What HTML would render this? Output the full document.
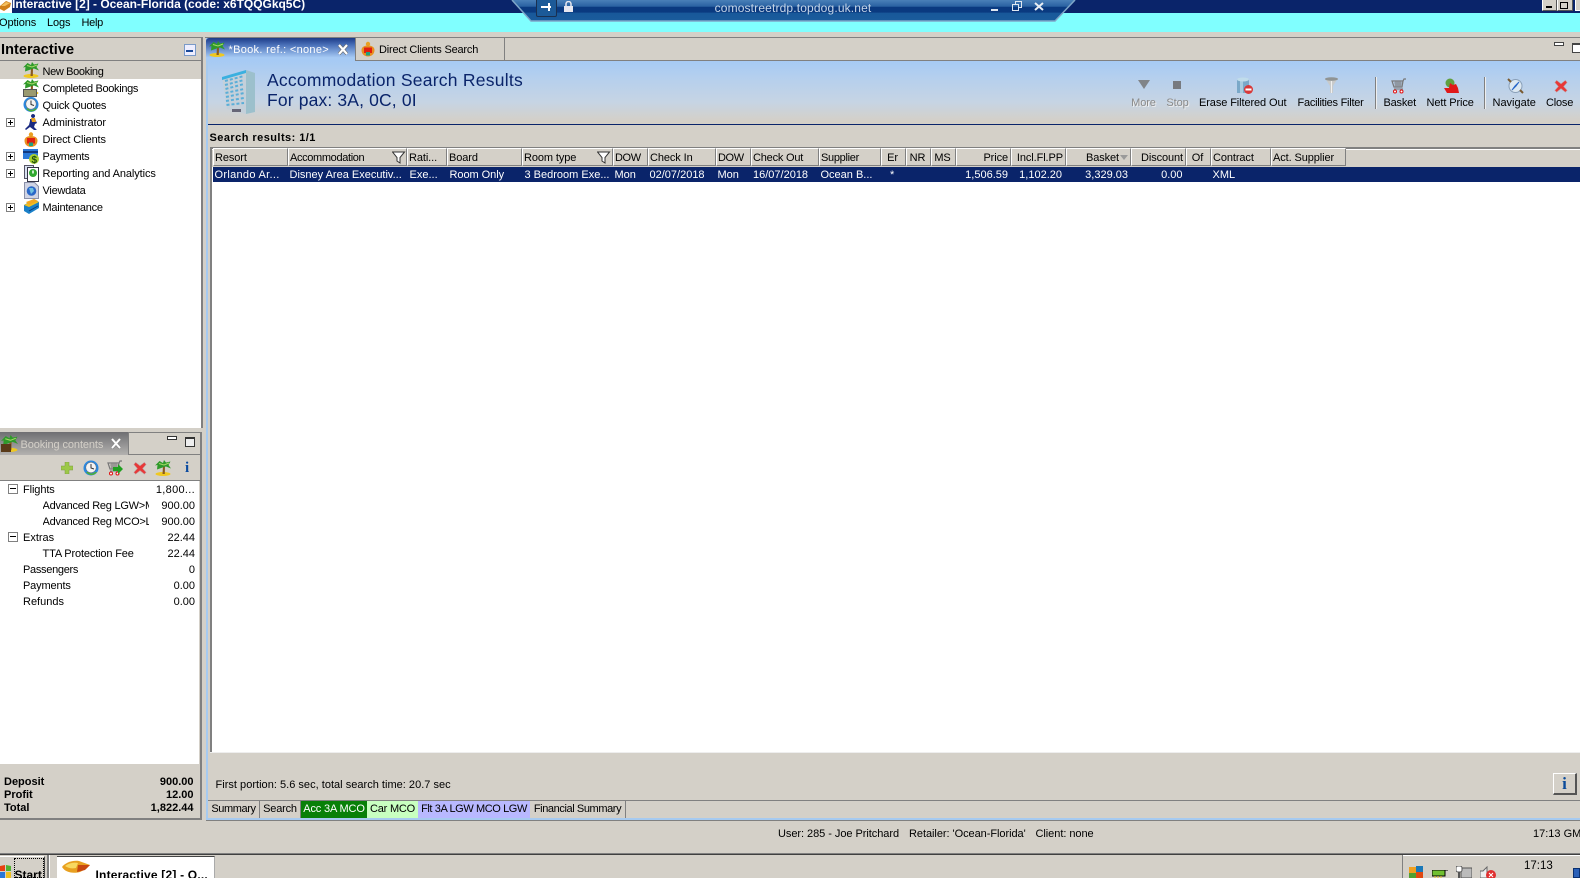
<!DOCTYPE html>
<html><head><meta charset="utf-8"><title>Interactive</title>
<style>
html,body{margin:0;padding:0;width:1580px;height:878px;overflow:hidden;background:#d4d0c8}
body{position:relative;font:11px/14px "Liberation Sans",sans-serif;color:#000}
.b,.t,svg.i{position:absolute}
.t{white-space:nowrap;line-height:14px;margin-top:1px}
.n{margin-top:0}
.r{text-align:right}
.c{text-align:center}
.bold{font-weight:bold}
.h{position:absolute;top:149px;height:16px;background:#d4d0c8;border-left:1px solid #fff;border-right:1px solid #808080;border-top:1px solid #fff;border-bottom:1px solid #808080;line-height:18px;white-space:nowrap;overflow:hidden;padding:0 1px 0 1px;margin-top:-1px;letter-spacing:-.1px}
.h.r{padding:0 2px 0 1px}
.h.c{padding:0 2px 0 0}
.w{color:#fff}
.ex{position:absolute;width:8px;height:8px;border:1px solid #808080;background:#fff}
.ex:before{content:"";position:absolute;left:1px;right:1px;top:3px;height:1px;background:#000}
.ex.p{width:7px;height:7px}
.ex.p:after{content:"";position:absolute;top:1px;bottom:1px;left:3px;width:1px;background:#000}
.tab{position:absolute;top:801px;height:17px;line-height:17px;border-right:1px solid #808080;text-align:center;white-space:nowrap;overflow:hidden}
.dim{color:#8a8a8a;text-shadow:1px 1px 0 #eee}
</style></head><body>
<svg width="0" height="0" style="position:absolute"><defs>
<symbol id="palm" viewBox="0 0 16 16"><ellipse cx="8" cy="14" rx="7.500" ry="2" fill="#f0c820"/><path d="M7.500 14 8 6 10 6 9.800 14z" fill="#8a5a20"/><path d="M9 7 2 9.500 2.500 5 0 5.500 4.500 1 8 3 9 0 11 2.500 15.500 1.500 13.500 5 16 8.500 11 6.500z" fill="#2f9a2a"/><path d="M9 5 4 3.500M9 5l5-2" stroke="#a8d868" fill="none"/></symbol>
<symbol id="red" viewBox="0 0 16 16"><circle cx="8" cy="3" r="2.200" fill="#e8a020"/><path d="M1.500 9c0-3 3-4.500 6.500-4.500s6.500 1.500 6.500 4.500c0 4-3 6.500-6.500 6.500S1.500 13 1.500 9z" fill="#e89020"/><path d="M4 6.500h8v5.500H4z" fill="#e02010"/><path d="M6 11h4v3.500H6z" fill="#20a080"/></symbol>
<symbol id="clock" viewBox="0 0 16 16"><circle cx="8" cy="8" r="7.500" fill="#2a88e0"/><circle cx="8" cy="7.500" r="5.200" fill="#f4f4f4" stroke="#666" stroke-width=".5"/><path d="M8 4v4l3 1" stroke="#333" fill="none"/><path d="M3 12c3 4 8 4 11 0l-2 0c-2 2-5 2-7 0z" fill="#50b030"/></symbol>
<symbol id="x" viewBox="0 0 16 16"><path d="M3 1.500 8 5.500 13 1.500 15 4 11 8.500 15 13 13 15 8 11 3 15 1 13 5 8.500 1 4z" fill="#e83838" stroke="#c0a0a0" stroke-width=".6"/></symbol>
<symbol id="cart" viewBox="0 0 16 16"><path d="M15 1h-2l-1 2H1l2 6h8l1-6" fill="none" stroke="#777" stroke-width="1.200"/><path d="M3 5h9M3.500 7h8M5 3v6M7 3v6M9 3v6" stroke="#777" stroke-width=".8"/><path d="M3 11h9" stroke="#777"/><circle cx="4" cy="13.500" r="1.500" fill="#fff" stroke="#e01010"/><circle cx="10.500" cy="13.500" r="1.500" fill="#fff" stroke="#e01010"/></symbol>
</defs></svg>

<!-- window title -->
<div class="b" style="left:0;top:0;width:1580px;height:13px;background:#0a246a"></div>
<div class="b" style="left:0;top:0;width:12px;height:13px;background:#fff"></div>
<svg class="i" style="left:0;top:0" width="11" height="12"><path d="M0 6 6 1 11 3 10 7 4 11 0 9z" fill="#d0801c"/><path d="M1 6 6 2 10 3 5 6z" fill="#f4c060"/></svg>
<div class="t w bold n" style="left:12px;top:-3px;font-size:12px;letter-spacing:-.02px">Interactive [2] - Ocean-Florida (code: x6TQQGkq5C)</div>
<div class="b" style="left:0;top:13px;width:1580px;height:19px;background:#80ffff"></div>
<div class="t n" style="left:-1px;top:16px;letter-spacing:-.1px">Options</div>
<div class="t n" style="left:47px;top:16px;letter-spacing:-.1px">Logs</div>
<div class="t n" style="left:81.500px;top:16px;letter-spacing:-.3px">Help</div>

<!-- window buttons -->
<div class="b" style="left:1542px;top:-4px;width:13px;height:13px;background:#d4d0c8;border:1px solid #fff;border-right-color:#555;border-bottom-color:#555"></div>
<div class="b" style="left:1546px;top:6px;width:6px;height:2px;background:#000"></div>
<div class="b" style="left:1557px;top:-4px;width:14px;height:13px;background:#d4d0c8;border:1px solid #fff;border-right-color:#555;border-bottom-color:#555"></div>
<div class="b" style="left:1560px;top:2px;width:6px;height:5px;border:1px solid #000"></div>
<div class="b" style="left:1575px;top:-4px;width:14px;height:13px;background:#d4d0c8;border:1px solid #fff"></div>

<!-- RDP bar -->
<svg class="i" style="left:508px;top:0" width="572" height="23"><defs><linearGradient id="rd" x1="0" y1="0" x2="0" y2="1"><stop offset="0" stop-color="#4a80b8"/><stop offset=".3" stop-color="#2a62a2"/><stop offset=".34" stop-color="#0a3a80"/><stop offset=".58" stop-color="#0a3a80"/><stop offset=".62" stop-color="#18589a"/><stop offset="1" stop-color="#1a5c9c"/></linearGradient></defs><path d="M4 0 23 21H547L567 0z" fill="url(#rd)"/><path d="M4 0 23 21H547L567 0" fill="none" stroke="#7fa6c8" stroke-width="1.500"/></svg>
<div class="b" style="left:536px;top:-2px;width:19px;height:17px;border:1px solid #1a3050;border-radius:2px;background:#1c5a98"></div>
<svg class="i" style="left:541px;top:2px" width="13" height="10"><path d="M0 5h7M8 1v8M9 5h1" stroke="#fff" stroke-width="2" fill="none"/></svg>
<svg class="i" style="left:563px;top:1px" width="11" height="11"><rect x="1" y="5" width="9" height="6" fill="#e8e8f0"/><path d="M3 5V3a2.500 2.500 0 0 1 5 0v2" fill="none" stroke="#e8e8f0" stroke-width="1.500"/></svg>
<div class="t c n" style="left:690px;top:1px;width:206px;font-size:12px;color:#c6d6e8;letter-spacing:.15px">comostreetrdp.topdog.uk.net</div>
<div class="b" style="left:991px;top:9px;width:7px;height:2px;background:#e0e8f0"></div>
<svg class="i" style="left:1012px;top:1px" width="11" height="11"><path d="M3.500 3V.5h6v6H7M.5 3.500h6v6h-6z" fill="none" stroke="#e0e8f0"/></svg>
<svg class="i" style="left:1034px;top:2px" width="10" height="9"><path d="M1 1l8 7M9 1 1 8" stroke="#e8eef4" stroke-width="2"/></svg>

<!-- main left panel -->
<div class="b" style="left:0;top:37px;width:203px;height:1px;background:#808080"></div>
<div class="t bold" style="left:1px;top:42px;font-size:14.500px;letter-spacing:.05px">Interactive</div>
<div class="b" style="left:184px;top:44px;width:10px;height:10px;border:1px solid #7a9ac8;background:#eef"></div>
<div class="b" style="left:186px;top:50px;width:7px;height:2px;background:#1a4a9a"></div>
<div class="b" style="left:0;top:60px;width:201px;height:1px;background:#808080"></div>
<div class="b" style="left:0;top:61px;width:201px;height:367px;background:#fff"></div>
<div class="b" style="left:0;top:61px;width:201px;height:18px;background:#d4d0c8"></div>
<div class="b" style="left:201px;top:37px;width:2px;height:391px;background:#808080"></div>

<svg class="i" style="left:23px;top:62px" width="16" height="16"><use href="#palm"/></svg>
<svg class="i" style="left:23px;top:79px" width="16" height="16"><use href="#palm"/></svg>
<div class="b" style="left:23px;top:89px;width:12px;height:6px;background:#9a9a70;border:1px solid #555"></div>
<svg class="i" style="left:23px;top:96px" width="16" height="17"><use href="#clock"/></svg>
<svg class="i" style="left:25px;top:114px" width="14" height="16"><path d="M8 0a2 2 0 1 0 .1 0zM5 5h5l2 4-2 1-1 3 3 3h-3L5 13l-4 3-1-1 4-4 1-4z" fill="#1a2a80"/><path d="M6 4h4l1 4H7z" fill="#e8a020"/></svg>
<svg class="i" style="left:23px;top:131px" width="16" height="17"><use href="#red"/></svg>
<svg class="i" style="left:23px;top:148px" width="16" height="17"><rect x="0" y="1" width="15" height="10" fill="#2a78d8"/><rect x="0" y="3" width="15" height="2" fill="#123a80"/><circle cx="11" cy="11" r="5" fill="#a8d030"/><text x="8.500" y="15" font-family="Liberation Sans" font-size="10" font-weight="bold" fill="#205010">$</text></svg>
<svg class="i" style="left:24px;top:165px" width="15" height="17"><rect x=".5" y=".5" width="9" height="13" fill="#d8e0f0" stroke="#556"/><rect x="3.500" y="2.500" width="11" height="14" fill="#fff" stroke="#334"/><circle cx="9" cy="8" r="4" fill="#30a830"/><path d="M9 5.500v3" stroke="#fff" stroke-width="1.500"/></svg>
<svg class="i" style="left:24px;top:182px" width="15" height="17"><path d="M.5.500h10l4 4v12H.5z" fill="#d0d4e4" stroke="#8a90a8"/><circle cx="7.500" cy="9" r="4.800" fill="#2a68c8"/><path d="M5 6h4l1 3-3 3z" fill="#70c0e0"/></svg>
<svg class="i" style="left:24px;top:199px" width="15" height="17"><path d="M0 6 10 0 15 3 15 9 5 15 0 12z" fill="#1a80c8"/><path d="M0 6 10 1 15 3 5 8z" fill="#f0c020"/><path d="M2 3 10 0 14 2 5 6z" fill="#f4a820"/><path d="M5 12l9-5" stroke="#083a80"/></svg>

<div class="t" style="left:42.500px;top:64px;letter-spacing:-.35px">New Booking</div>
<div class="t" style="left:42.500px;top:81px;letter-spacing:-.33px">Completed Bookings</div>
<div class="t" style="left:42.500px;top:98px;letter-spacing:-.25px">Quick Quotes</div>
<div class="t" style="left:42.500px;top:115px;letter-spacing:-.1px">Administrator</div>
<div class="t" style="left:42.500px;top:132px;letter-spacing:-.15px">Direct Clients</div>
<div class="t" style="left:42.500px;top:149px;letter-spacing:-.25px">Payments</div>
<div class="t" style="left:42.500px;top:166px;letter-spacing:-.1px">Reporting and Analytics</div>
<div class="t" style="left:42.500px;top:183px;letter-spacing:-.25px">Viewdata</div>
<div class="t" style="left:42.500px;top:200px;letter-spacing:-.25px">Maintenance</div>
<div class="ex p" style="left:6px;top:118px"></div>
<div class="ex p" style="left:6px;top:152px"></div>
<div class="ex p" style="left:6px;top:169px"></div>
<div class="ex p" style="left:6px;top:203px"></div>

<!-- booking contents panel -->
<div class="b" style="left:0;top:428px;width:203px;height:4px;background:#d4d0c8"></div>
<div class="b" style="left:0;top:432px;width:201px;height:1px;background:#808080"></div>
<div class="b" style="left:0;top:432px;width:128px;height:23px;background:linear-gradient(#6f6f72,#b4b2b0)"></div>
<div class="b" style="left:128px;top:433px;width:1px;height:22px;background:#808080"></div>
<div class="b" style="left:129px;top:454px;width:72px;height:1px;background:#808080"></div>
<svg class="i" style="left:1px;top:435px" width="17" height="17"><use href="#palm"/></svg>
<div class="b" style="left:1px;top:444px;width:10px;height:8px;background:#5a3a18"></div>
<div class="t" style="left:20.500px;top:437px;color:#d4d0c8;letter-spacing:-.1px">Booking contents</div>
<svg class="i" style="left:111px;top:438px" width="10" height="11"><path d="M1 1l8 9M9 1 1 10" stroke="#888" stroke-width="3.400"/><path d="M1 1l8 9M9 1 1 10" stroke="#fff" stroke-width="2"/></svg>
<div class="b" style="left:167px;top:436px;width:8px;height:2px;border:1px solid #333;background:#fff"></div>
<div class="b" style="left:185px;top:437px;width:8px;height:7px;border:1px solid #333;border-top-width:2px;background:#eee"></div>
<div class="b" style="left:0;top:480px;width:200px;height:1px;background:#808080"></div>
<div class="b" style="left:0;top:481px;width:199px;height:283px;background:#fff"></div>
<div class="b" style="left:200px;top:432px;width:2px;height:387px;background:#808080"></div>

<svg class="i" style="left:61px;top:462px" width="12" height="12"><path d="M4 0h4v4h4v4H8v4H4V8H0V4h4z" fill="#9cc848" stroke="#7a9a40" stroke-width=".5"/></svg>
<svg class="i" style="left:83px;top:460px" width="16" height="16"><use href="#clock"/></svg>
<svg class="i" style="left:107px;top:460px" width="16" height="16"><use href="#cart"/></svg>
<svg class="i" style="left:113px;top:464px" width="10" height="10"><path d="M0 3h5V0l5 5-5 5V7H0z" fill="#20a020"/></svg>
<svg class="i" style="left:133px;top:461px" width="14" height="14"><use href="#x"/></svg>
<svg class="i" style="left:155px;top:460px" width="16" height="16"><use href="#palm"/></svg>
<div class="t bold n" style="left:185px;top:460px;font:bold 15px/16px 'Liberation Serif',serif;color:#0a4aa0">i</div>

<div class="ex" style="left:8px;top:484px"></div>
<div class="ex" style="left:8px;top:532px"></div>
<div class="t" style="left:23px;top:482px;letter-spacing:-.1px">Flights</div>
<div class="t r" style="right:1385px;top:482px;letter-spacing:.3px">1,800...</div>
<div class="t" style="left:42.500px;top:498px;width:106px;overflow:hidden;letter-spacing:-.25px">Advanced Reg LGW&gt;MCO</div>
<div class="t r" style="right:1385px;top:498px">900.00</div>
<div class="t" style="left:42.500px;top:514px;width:106px;overflow:hidden;letter-spacing:-.25px">Advanced Reg MCO&gt;LGW</div>
<div class="t r" style="right:1385px;top:514px">900.00</div>
<div class="t" style="left:23px;top:530px">Extras</div>
<div class="t r" style="right:1385px;top:530px">22.44</div>
<div class="t" style="left:42.500px;top:546px;letter-spacing:-.15px">TTA Protection Fee</div>
<div class="t r" style="right:1385px;top:546px">22.44</div>
<div class="t" style="left:23px;top:562px;letter-spacing:-.3px">Passengers</div>
<div class="t r" style="right:1385px;top:562px">0</div>
<div class="t" style="left:23px;top:578px;letter-spacing:-.15px">Payments</div>
<div class="t r" style="right:1385px;top:578px">0.00</div>
<div class="t" style="left:23px;top:594px">Refunds</div>
<div class="t r" style="right:1385px;top:594px">0.00</div>

<div class="t bold" style="left:4px;top:774px">Deposit</div>
<div class="t bold r" style="right:1386.500px;top:774px">900.00</div>
<div class="t bold" style="left:4px;top:787px">Profit</div>
<div class="t bold r" style="right:1386.500px;top:787px">12.00</div>
<div class="t bold" style="left:4px;top:800px">Total</div>
<div class="t bold r" style="right:1386.500px;top:800px">1,822.44</div>
<div class="b" style="left:0;top:818px;width:202px;height:2px;background:#808080"></div>

<!-- main panel -->
<div class="b" style="left:205px;top:37px;width:1375px;height:1px;background:#808080"></div>
<div class="b" style="left:206px;top:60px;width:1374px;height:1px;background:#808080"></div>
<div class="b" style="left:206px;top:38px;width:2px;height:782px;background:#a6caf0"></div>
<div class="b" style="left:208px;top:61px;width:1372px;height:63px;background:linear-gradient(#a6caf4 0%,#b4cfee 25%,#c6d4e4 65%,#d4d0c8 95%)"></div>
<div class="b" style="left:208px;top:124px;width:1372px;height:1px;background:#0a246a"></div>

<!-- tabs -->
<div class="b" style="left:206px;top:38px;width:149px;height:23px;background:linear-gradient(#1c3a88 0%,#4a70b8 30%,#a6caf4 85%);border-radius:3px 0 0 0"></div>
<div class="b" style="left:355px;top:38px;width:1px;height:23px;background:#808080"></div>
<svg class="i" style="left:209px;top:41px" width="16" height="16"><use href="#palm"/></svg>
<div class="t w n" style="left:228.500px;top:43px;letter-spacing:.3px">*Book. ref.: &lt;none&gt;</div>
<svg class="i" style="left:338px;top:44px" width="10" height="11"><path d="M1 1l8 9M9 1 1 10" stroke="#666" stroke-width="3.400"/><path d="M1 1l8 9M9 1 1 10" stroke="#fff" stroke-width="2.200"/></svg>
<svg class="i" style="left:360px;top:41px" width="16" height="16"><use href="#red"/></svg>
<div class="t n" style="left:379px;top:43px;letter-spacing:-.2px">Direct Clients Search</div>
<div class="b" style="left:504px;top:38px;width:1px;height:22px;background:#808080"></div>
<div class="b" style="left:1554px;top:42px;width:8px;height:2px;border:1px solid #444;background:#fff"></div>
<div class="b" style="left:1572px;top:43px;width:10px;height:7px;border:1px solid #444;border-top-width:2px;background:#fff"></div>

<!-- heading -->
<svg class="i" style="left:220px;top:68px" width="37" height="48" viewBox="0 0 37 48"><path d="M2 9 26 2V46L7 41z" fill="#c4d0da"/><path d="M26 2 35 5V44L26 46z" fill="#9cc0cc"/><path d="M2 9 26 2V5L2 12z" fill="#3ab0e0"/><g stroke="#5aaed8" stroke-width="2" stroke-dasharray="3 2" fill="none"><path d="M5 13 24 8M5 17 24 12M5.500 21 24 16M5.500 25 24 21M6 29 24 25M6 33 24 30M6.500 37 24 35"/></g><path d="M12 41h9v3h-9z" fill="#667"/></svg>
<div class="t n" style="left:267px;top:72px;font-size:17.500px;line-height:17px;color:#0a246a;letter-spacing:.25px">Accommodation Search Results</div>
<div class="t n" style="left:267px;top:92px;font-size:17.500px;line-height:17px;color:#0a246a;letter-spacing:.15px">For pax: 3A, 0C, 0I</div>

<!-- toolbar -->
<svg class="i" style="left:1138px;top:80px" width="13" height="10"><path d="M0 0h12L6 9z" fill="#808488"/></svg>
<div class="b" style="left:1173px;top:81px;width:8px;height:8px;background:#777a80"></div>
<svg class="i" style="left:1237px;top:77px" width="17" height="18"><path d="M0 2h12v14H0z" fill="#7aa8c8"/><path d="M3 3h3v13H3z" fill="#a8cce0"/><ellipse cx="6" cy="2.500" rx="6" ry="2" fill="#c0dceb"/><circle cx="11.500" cy="12.500" r="4.500" fill="#d83838"/><rect x="8.500" y="11.500" width="6" height="2" fill="#fff"/></svg>
<svg class="i" style="left:1325px;top:77px" width="13" height="17"><path d="M0 1h13L8 9v7H5V9z" fill="#c8caca"/><ellipse cx="6.500" cy="2" rx="6.500" ry="1.800" fill="#909494"/><path d="M6.500 4v12" stroke="#f0f0f0"/></svg>
<div class="b" style="left:1375px;top:77px;width:1px;height:32px;background:#808080;border-right:1px solid #eee"></div>
<svg class="i" style="left:1391px;top:78px" width="16" height="16"><use href="#cart"/></svg>
<svg class="i" style="left:1443px;top:78px" width="17" height="16"><circle cx="7" cy="5" r="4.500" fill="#60a040"/><path d="M1 10h5l1-5 3 2 3-1 2 4 1 5H4z" fill="#e01818"/></svg>
<div class="b" style="left:1484px;top:77px;width:1px;height:32px;background:#808080;border-right:1px solid #eee"></div>
<svg class="i" style="left:1507px;top:78px" width="17" height="16"><circle cx="8.500" cy="8" r="6.500" fill="#dce8f2" stroke="#8aa0b8"/><path d="M1 1l3 3M16 15l-3-3" stroke="#7a5a30" stroke-width="2"/><path d="M12 4 9 8 5 12 8 8z" fill="#e02020" stroke="#2a68c8"/></svg>
<svg class="i" style="left:1554px;top:79px" width="14" height="14"><use href="#x"/></svg>

<div class="t c dim" style="left:1123.500px;top:95px;width:40px;letter-spacing:-.1px">More</div>
<div class="t c dim" style="left:1157.500px;top:95px;width:40px;letter-spacing:-.1px">Stop</div>
<div class="t" style="left:1199px;top:95px;letter-spacing:-.1px">Erase Filtered Out</div>
<div class="t" style="left:1297.500px;top:95px;letter-spacing:-.25px">Facilities Filter</div>
<div class="t" style="left:1383.500px;top:95px;letter-spacing:-.2px">Basket</div>
<div class="t" style="left:1426.500px;top:95px;letter-spacing:-.1px">Nett Price</div>
<div class="t" style="left:1492.500px;top:95px">Navigate</div>
<div class="t" style="left:1546px;top:95px;letter-spacing:-.2px">Close</div>

<div class="t bold" style="left:209.500px;top:130px;letter-spacing:.45px">Search results: 1/1</div>

<!-- grid -->
<div class="b" style="left:210px;top:147px;width:1370px;height:2px;background:#808080"></div>
<div class="b" style="left:210px;top:147px;width:2px;height:606px;background:#808080"></div>
<div class="b" style="left:212px;top:149px;width:1368px;height:603px;background:#fff"></div>
<div class="b" style="left:210px;top:752px;width:1370px;height:1px;background:#eee"></div>
<div class="b" style="left:212px;top:149px;width:1368px;height:18px;background:#d4d0c8;border-top:1px solid #fff;box-sizing:border-box"></div>

<div class="h" style="left:213px;width:71px">Resort</div>
<div class="h" style="left:288px;width:115px;letter-spacing:-.35px">Accommodation</div>
<div class="h" style="left:407px;width:36px">Rati...</div>
<div class="h" style="left:447px;width:71px">Board</div>
<div class="h" style="left:522px;width:87px">Room type</div>
<div class="h" style="left:613px;width:31px;letter-spacing:-.4px">DOW</div>
<div class="h" style="left:648px;width:64px">Check In</div>
<div class="h" style="left:716px;width:31px;letter-spacing:-.4px">DOW</div>
<div class="h" style="left:751px;width:64px;letter-spacing:-.2px">Check Out</div>
<div class="h" style="left:819px;width:58px;letter-spacing:-.3px">Supplier</div>
<div class="h c" style="left:881px;width:21px">Er</div>
<div class="h c" style="left:906px;width:21px">NR</div>
<div class="h c" style="left:931px;width:21px">MS</div>
<div class="h r" style="left:956px;width:50px">Price</div>
<div class="h r" style="left:1011px;width:50px">Incl.Fl.PP</div>
<div class="h r" style="left:1066px;width:60px"><span style="margin-right:9px">Basket</span></div>
<div class="h r" style="left:1131px;width:50px">Discount</div>
<div class="h c" style="left:1186px;width:21px">Of</div>
<div class="h" style="left:1211px;width:56px">Contract</div>
<div class="h" style="left:1271px;width:71px">Act. Supplier</div>
<svg class="i" style="left:392px;top:151px" width="14" height="13"><path d="M.5 1h12L8 6.500V12L5 10V6.500z" fill="#fff" stroke="#333"/></svg>
<svg class="i" style="left:597px;top:151px" width="14" height="13"><path d="M.5 1h12L8 6.500V12L5 10V6.500z" fill="#fff" stroke="#333"/></svg>
<svg class="i" style="left:1120px;top:155px" width="8" height="6"><path d="M0 0h8L4 5z" fill="#9a9a9a"/></svg>

<div class="b" style="left:213px;top:167px;width:1367px;height:15px;background:#0a246a"></div>
<div class="t w n" style="left:214.500px;top:168px;letter-spacing:.3px">Orlando Ar...</div>
<div class="t w n" style="left:289.500px;top:168px">Disney Area Executiv...</div>
<div class="t w n" style="left:409.500px;top:168px">Exe...</div>
<div class="t w n" style="left:449.500px;top:168px;letter-spacing:-.05px">Room Only</div>
<div class="t w n" style="left:524.500px;top:168px">3 Bedroom Exe...</div>
<div class="t w n" style="left:614.500px;top:168px">Mon</div>
<div class="t w n" style="left:649.500px;top:168px">02/07/2018</div>
<div class="t w n" style="left:717.500px;top:168px">Mon</div>
<div class="t w n" style="left:753px;top:168px">16/07/2018</div>
<div class="t w n" style="left:820.500px;top:168px">Ocean B...</div>
<div class="t w n" style="left:890px;top:168px">*</div>
<div class="t w r n" style="right:572px;top:168px">1,506.59</div>
<div class="t w r n" style="right:518px;top:168px">1,102.20</div>
<div class="t w r n" style="right:452px;top:168px">3,329.03</div>
<div class="t w r n" style="right:397.500px;top:168px">0.00</div>
<div class="t w n" style="left:1212.500px;top:168px">XML</div>

<!-- bottom of main -->
<div class="t" style="left:215.500px;top:777px;letter-spacing:.02px">First portion: 5.6 sec, total search time: 20.7 sec</div>
<div class="b" style="left:1553px;top:773px;width:21px;height:19px;border:1px solid #fff;border-right:2px solid #555;border-bottom:2px solid #555;background:#d4d0c8"></div>
<div class="t c n" style="left:1553px;top:775px;width:23px;font:bold 17px/17px 'Liberation Serif',serif;color:#0a4a9a">i</div>
<div class="b" style="left:208px;top:800px;width:1372px;height:1px;background:#808080"></div>

<div class="tab" style="left:208px;width:51px;letter-spacing:-.4px">Summary</div>
<div class="tab" style="left:260px;width:40px;letter-spacing:-.2px">Search</div>
<div class="tab" style="left:301px;width:66px;background:#088008;color:#fff;border-right:0;height:18px;letter-spacing:-.15px">Acc 3A MCO</div>
<div class="tab" style="left:367px;width:51px;background:#c8ffc0;border-right:0;letter-spacing:-.2px">Car MCO</div>
<div class="tab" style="left:418px;width:112px;background:#b8b8ff;border-right:0;letter-spacing:-.4px">Flt 3A LGW MCO LGW</div>
<div class="tab" style="left:530px;width:95px;letter-spacing:-.4px">Financial Summary</div>

<div class="b" style="left:206px;top:818px;width:1374px;height:2px;background:#a6caf0"></div>
<div class="b" style="left:206px;top:820px;width:1374px;height:1px;background:#808080"></div>

<!-- status -->
<div class="t" style="left:778px;top:826px;letter-spacing:-.05px">User: 285 - Joe Pritchard</div>
<div class="t" style="left:909px;top:826px;letter-spacing:-.05px">Retailer: 'Ocean-Florida'</div>
<div class="t" style="left:1035.500px;top:826px;letter-spacing:-.05px">Client: none</div>
<div class="t" style="left:1533px;top:826px">17:13 GMT</div>

<!-- taskbar -->
<div class="b" style="left:0;top:853px;width:1580px;height:1px;background:#808080"></div>
<div class="b" style="left:0;top:854px;width:1580px;height:1px;background:#404040"></div>
<div class="b" style="left:0;top:856px;width:45px;height:22px;background:#d4d0c8;border-top:1px solid #fff;border-right:1px solid #444;box-sizing:border-box"></div>
<div class="b" style="left:14px;top:858px;width:30px;height:20px;border:1px dotted #000;box-sizing:border-box"></div>
<svg class="i" style="left:0;top:865px" width="12" height="13"><path d="M0 1 5 0v6H0z" fill="#e84010"/><path d="M6 0l5 1v5H6z" fill="#50b030"/><path d="M0 7h5v6H0z" fill="#2a78d8"/><path d="M6 7h5v6H6z" fill="#f0c020"/></svg>
<div class="t bold n" style="left:14.500px;top:868px;font-size:12px">Start</div>
<div class="b" style="left:47px;top:855px;width:2px;height:23px;background:#808080;border-right:1px solid #fff"></div>
<div class="b" style="left:57px;top:856px;width:158px;height:22px;background:#fff;border-top:1px solid #444;border-right:1px solid #aaa;box-sizing:border-box"></div>
<svg class="i" style="left:62px;top:860px" width="28" height="17"><path d="M0 7C3 3 10 0 17 1l11 4-4 4-6 3C10 14 3 12 0 7z" fill="#e8a020"/><path d="M3 6C7 3 12 2 16 3l-2 5C10 9 6 8 3 6z" fill="#f8d860"/><path d="M16 5l12 0-5 5-8 2z" fill="#c84810"/></svg>
<div class="t bold n" style="left:95.500px;top:868px;font-size:12px;letter-spacing:.2px">Interactive [2] - O...</div>
<div class="b" style="left:1402px;top:855px;width:1px;height:23px;background:#808080"></div>
<div class="b" style="left:1403px;top:855px;width:177px;height:1px;background:#fff"></div>
<svg class="i" style="left:1409px;top:866px" width="15" height="12"><path d="M0 1h7v6H0z" fill="#f0a020"/><path d="M7 0h7v6H7z" fill="#1a78b8"/><path d="M0 7h7v5H0z" fill="#50a030"/><path d="M7 6h7v6H7z" fill="#e04810"/></svg>
<svg class="i" style="left:1432px;top:870px" width="16" height="8"><rect x="0" y="0" width="13" height="6" fill="#70c030" stroke="#000"/><path d="M13 0h3" stroke="#000"/><path d="M3 6v2M6 6v2M9 6v2" stroke="#e8c020"/></svg>
<svg class="i" style="left:1456px;top:866px" width="16" height="12"><rect x="5" y="2" width="11" height="10" fill="#bbb" stroke="#555"/><rect x="0" y="0" width="6" height="6" rx="2" fill="#fff" stroke="#555"/><path d="M3 6v6" stroke="#555" stroke-width="2"/></svg>
<svg class="i" style="left:1480px;top:866px" width="17" height="12"><path d="M0 5h3l4-4v11H0z" fill="#eee" stroke="#666"/><circle cx="11" cy="9" r="5" fill="#e03030"/><path d="M9 7l4 4M13 7l-4 4" stroke="#fff"/></svg>
<div class="t n" style="left:1524px;top:859px;font-size:11.500px">17:13</div>
<div class="b" style="left:1573px;top:868px;width:7px;height:10px;background:#2a60b8;border:1px solid #0a3070;box-sizing:border-box"></div>
</body></html>
